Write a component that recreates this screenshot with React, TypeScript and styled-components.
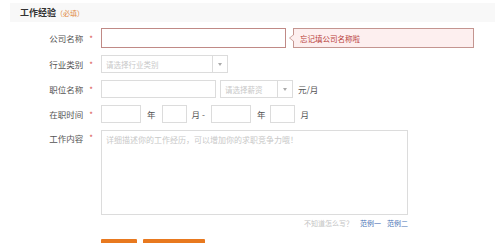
import styled, { createGlobalStyle } from "styled-components";

const GlobalStyle = createGlobalStyle`
  html, body {
    margin: 0;
    padding: 0;
    background: #fff;
  }
  body {
    font-family: "Noto Sans CJK SC", "Liberation Sans", sans-serif;
    color: #555;
    overflow: hidden;
  }
`;

const Page = styled.div`
  width: 500px;
  height: 243px;
  padding-top: 3px;
  box-sizing: border-box;
  overflow: hidden;
`;

const SectionHeader = styled.div`
  margin: 0 5px 0 10px;
  height: 19px;
  background: #f8f8f8;
  display: flex;
  align-items: center;
  padding-left: 10px;
`;

const Title = styled.span`
  font-size: 9px;
  font-weight: bold;
  color: #333;
`;

const Required = styled.span`
  font-size: 7px;
  color: #e0873a;
`;

const Form = styled.div`
  display: flex;
  flex-direction: column;
  gap: 7px;
  margin-top: 6px;
`;

const Row = styled.div<{ $top?: boolean }>`
  display: flex;
  align-items: ${({ $top }) => ($top ? "flex-start" : "center")};
`;

const Label = styled.div<{ $top?: boolean }>`
  width: 101px;
  box-sizing: border-box;
  padding-right: 8px;
  display: flex;
  justify-content: flex-end;
  align-items: center;
  font-size: 8.5px;
  color: #555;
  line-height: ${({ $top }) => ($top ? "16px" : "normal")};
`;

const Star = styled.span`
  color: #d9534f;
  margin-left: 6px;
  font-size: 8px;
`;

const Input = styled.div<{ $w: number; $error?: boolean }>`
  width: ${({ $w }) => $w}px;
  height: ${({ $error }) => ($error ? 20 : 18)}px;
  box-sizing: border-box;
  border: 1px solid ${({ $error }) => ($error ? "#c08a86" : "#dcdcdc")};
  background: #fff;
`;

const ErrorTip = styled.div`
  position: relative;
  margin-left: 7px;
  width: 181px;
  height: 20px;
  box-sizing: border-box;
  border: 1px solid #c49590;
  background: #fdefef;
  color: #b8403a;
  font-size: 7.5px;
  display: flex;
  align-items: center;
  padding-left: 6px;

  &::before,
  &::after {
    content: "";
    position: absolute;
    top: 5px;
    border-style: solid;
    border-color: transparent;
  }
  &::before {
    left: -5px;
    border-width: 4px 5px 4px 0;
    border-right-color: #c49590;
  }
  &::after {
    left: -4px;
    border-width: 4px 5px 4px 0;
    border-right-color: #fdefef;
  }
`;

const Select = styled.div<{ $w: number }>`
  width: ${({ $w }) => $w}px;
  height: 18px;
  box-sizing: border-box;
  border: 1px solid #dcdcdc;
  display: flex;
  margin-left: ${({ $w }) => ($w < 100 ? 4 : 0)}px;
`;

const SelectText = styled.span`
  flex: 1;
  font-size: 7.5px;
  color: #c8c8c8;
  padding-left: 4px;
  display: flex;
  align-items: center;
`;

const SelectArrow = styled.span`
  width: 14px;
  border-left: 1px solid #dcdcdc;
  display: flex;
  align-items: center;
  justify-content: center;

  &::after {
    content: "";
    border-style: solid;
    border-width: 3px 2.5px 0 2.5px;
    border-color: #aaa transparent transparent transparent;
  }
`;

const Unit = styled.span<{ $l: number; $r: number }>`
  font-size: 8.5px;
  color: #555;
  margin: 0 ${({ $r }) => $r}px 0 ${({ $l }) => $l}px;
`;

const TextArea = styled.div`
  width: 307px;
  height: 85px;
  box-sizing: border-box;
  border: 1px solid #dcdcdc;
  font-size: 8px;
  color: #c8c8c8;
  padding: 3px 4px;
`;

const HintRow = styled.div`
  width: 408px;
  display: flex;
  justify-content: flex-end;
  align-items: center;
  gap: 6px;
  font-size: 7px;
  margin-top: -4px;
`;

const Hint = styled.span`
  color: #c4c4c4;
  margin-right: 1px;
`;

const Example = styled.span`
  color: #4a73b5;
`;

const ButtonRow = styled.div`
  display: flex;
  gap: 6px;
  padding-left: 101px;
  margin-top: 11px;
`;

const Button = styled.div<{ $w: number }>`
  width: ${({ $w }) => $w}px;
  height: 20px;
  background: #e8791f;
  border-radius: 1px;
`;

export default function App() {
  return (
    <Page>
      <GlobalStyle />
      <SectionHeader>
        <Title>工作经验</Title>
        <Required>（必填）</Required>
      </SectionHeader>
      <Form>
        <Row>
          <Label>
            公司名称<Star>*</Star>
          </Label>
          <Input $w={185} $error />
          <ErrorTip>忘记填公司名称啦</ErrorTip>
        </Row>
        <Row>
          <Label>
            行业类别<Star>*</Star>
          </Label>
          <Select $w={127}>
            <SelectText>请选择行业类别</SelectText>
            <SelectArrow />
          </Select>
        </Row>
        <Row>
          <Label>
            职位名称<Star>*</Star>
          </Label>
          <Input $w={115} />
          <Select $w={73}>
            <SelectText>请选择薪资</SelectText>
            <SelectArrow />
          </Select>
          <Unit $l={5} $r={0}>元/月</Unit>
        </Row>
        <Row>
          <Label>
            在职时间<Star>*</Star>
          </Label>
          <Input $w={40} />
          <Unit $l={6} $r={6}>年</Unit>
          <Input $w={25} />
          <Unit $l={5} $r={6}>月 -</Unit>
          <Input $w={40} />
          <Unit $l={6} $r={5}>年</Unit>
          <Input $w={25} />
          <Unit $l={5} $r={0}>月</Unit>
        </Row>
        <Row $top>
          <Label $top>
            工作内容<Star>*</Star>
          </Label>
          <TextArea>详细描述你的工作经历，可以增加你的求职竞争力哦！</TextArea>
        </Row>
        <HintRow>
          <Hint>不知道怎么写？</Hint>
          <Example>范例一</Example>
          <Example>范例二</Example>
        </HintRow>
      </Form>
      <ButtonRow>
        <Button $w={36} />
        <Button $w={62} />
      </ButtonRow>
    </Page>
  );
}
